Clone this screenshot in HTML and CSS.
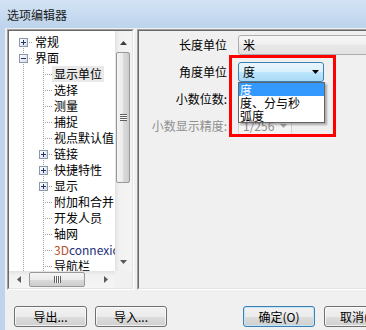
FILE: index.html
```html
<!DOCTYPE html>
<html lang="zh-CN">
<head>
<meta charset="utf-8">
<title>选项编辑器</title>
<link rel="stylesheet" href="styles.css">
</head>
<body>
<div class="window">
  <div class="titlebar">选项编辑器</div>
  <div class="frame">
    <div class="main">
      <div class="tree-panel">
        <div class="tree-body">
          <div class="tree-view">
            <div class="node"><span class="cell cell-a first"><span class="box plus"></span></span><span class="label">常规</span></div>
            <div class="node"><span class="cell cell-a mid"><span class="box minus"></span></span><span class="label">界面</span></div>
            <div class="node"><span class="cell rail"></span><span class="cell cell-b"></span><span class="label selected">显示单位</span></div>
            <div class="node"><span class="cell rail"></span><span class="cell cell-b"></span><span class="label">选择</span></div>
            <div class="node"><span class="cell rail"></span><span class="cell cell-b"></span><span class="label">测量</span></div>
            <div class="node"><span class="cell rail"></span><span class="cell cell-b"></span><span class="label">捕捉</span></div>
            <div class="node"><span class="cell rail"></span><span class="cell cell-b"></span><span class="label">视点默认值</span></div>
            <div class="node"><span class="cell rail"></span><span class="cell cell-b"><span class="box plus"></span></span><span class="label">链接</span></div>
            <div class="node"><span class="cell rail"></span><span class="cell cell-b"><span class="box plus"></span></span><span class="label">快捷特性</span></div>
            <div class="node"><span class="cell rail"></span><span class="cell cell-b"><span class="box plus"></span></span><span class="label">显示</span></div>
            <div class="node"><span class="cell rail"></span><span class="cell cell-b"></span><span class="label">附加和合并</span></div>
            <div class="node"><span class="cell rail"></span><span class="cell cell-b"></span><span class="label">开发人员</span></div>
            <div class="node"><span class="cell rail"></span><span class="cell cell-b"></span><span class="label">轴网</span></div>
            <div class="node"><span class="cell rail"></span><span class="cell cell-b"></span><span class="label"><span class="brand3d">3D</span><span class="brandrest">connexion</span></span></div>
            <div class="node"><span class="cell rail"></span><span class="cell cell-b"></span><span class="label">导航栏</span></div>
          </div>
          <div class="vscroll">
            <div class="sb-btn up"><svg width="7" height="4" viewBox="0 0 7 4"><path d="M0 4H7L3.5 0Z" fill="#3c3c3c"/></svg></div>
            <div class="sb-track"><div class="thumb-v"><span class="grip-h"></span></div></div>
            <div class="sb-btn down"><svg width="7" height="4" viewBox="0 0 7 4"><path d="M0 0H7L3.5 4Z" fill="#5a5a5a"/></svg></div>
          </div>
          <div class="hscroll">
            <div class="sb-btn left"><svg width="4" height="7" viewBox="0 0 4 7"><path d="M4 0V7L0 3.5Z" fill="#5a5a5a"/></svg></div>
            <div class="sb-track-h"><div class="thumb-h"><span class="grip-v"></span></div></div>
            <div class="sb-btn right"><svg width="4" height="7" viewBox="0 0 4 7"><path d="M0 0V7L4 3.5Z" fill="#5a5a5a"/></svg></div>
          </div>
          <div class="corner"></div>
        </div>
      </div>
      <div class="prop-panel">
        <div class="prop-body">
          <div class="form">
            <span class="lbl">长度单位</span>
            <div class="combo wide">米</div>
            <span class="lbl">角度单位</span>
            <div class="combo focused">
              <span class="combo-text">度</span>
              <svg class="arrow" width="7" height="4" viewBox="0 0 7 4"><path d="M0 0H7L3.5 4Z" fill="#000"/></svg>
              <div class="dropdown">
                <div class="opt active">度</div>
                <div class="opt">度、分与秒</div>
                <div class="opt">弧度</div>
              </div>
              <div class="highlight-box"></div>
            </div>
            <span class="lbl">小数位数:</span>
            <div class="combo normal"></div>
            <span class="lbl disabled">小数显示精度:</span>
            <div class="combo off">
              <span class="combo-text">1/256</span>
              <svg class="arrow" width="7" height="4" viewBox="0 0 7 4"><path d="M0 0H7L3.5 4Z" fill="#a8a8a8"/></svg>
            </div>
          </div>
        </div>
      </div>
    </div>
    <div class="buttons">
      <button class="btn w73">导出...</button>
      <button class="btn w72 gap-s">导入...</button>
      <button class="btn w72 default gap-l">确定(O)</button>
      <button class="btn w72 gap-m">取消(C)</button>
    </div>
  </div>
</div>
</body>
</html>
```

FILE: styles.css
```css
html, body {
  margin: 0;
  padding: 0;
  overflow: hidden;
  background: #f0f0f0;
}

body {
  font-family: "Noto Sans CJK SC", "Noto Sans", sans-serif;
  font-size: 12px;
  color: #000;
}

.window {
  width: 440px;
  height: 330px;
  background: #f0f0f0;
}

.titlebar {
  height: 28px;
  box-sizing: border-box;
  padding-left: 7px;
  line-height: 30px;
  font-size: 12px;
  color: #1a1a1a;
  background: linear-gradient(#d3e3f5, #bdd3ec);
}

.frame {
  height: 302px;
  box-sizing: border-box;
  border-left: 5px solid #bfd4ec;
}

.main {
  display: flex;
  gap: 3px;
  height: 262px;
  box-sizing: border-box;
  padding: 1px 0 0 2px;
}

/* ---------- tree panel ---------- */
.tree-panel {
  width: 127px;
  flex: none;
  box-sizing: border-box;
  border: 1px solid;
  border-color: #a0a0a0 #ffffff #ffffff #a0a0a0;
}

.tree-body {
  height: 100%;
  box-sizing: border-box;
  border: 1px solid;
  border-color: #696969 #e3e3e3 #e3e3e3 #696969;
  display: grid;
  grid-template-columns: 1fr 17px;
  grid-template-rows: 1fr 17px;
}

.tree-view {
  background: #fff;
  overflow: hidden;
  min-width: 0;
  min-height: 0;
  padding-top: 3px;
}

.node {
  display: flex;
  height: 16px;
  padding-left: 4px;
  white-space: nowrap;
}

.cell {
  flex: none;
  height: 16px;
  box-sizing: border-box;
  display: flex;
  align-items: flex-start;
}

.cell-a {
  width: 20px;
  padding-left: 6px;
}

.cell-a.first {
  background:
    repeating-linear-gradient(to bottom, #a0a0a0 0 1px, transparent 1px 2px) 10px 8px / 1px 8px no-repeat,
    repeating-linear-gradient(to right, #a0a0a0 0 1px, transparent 1px 2px) 10px 8px / 10px 1px no-repeat;
}

.cell-a.mid {
  background:
    repeating-linear-gradient(to bottom, #a0a0a0 0 1px, transparent 1px 2px) 10px 0 / 1px 16px no-repeat,
    repeating-linear-gradient(to right, #a0a0a0 0 1px, transparent 1px 2px) 10px 8px / 10px 1px no-repeat;
}

.rail {
  width: 20px;
  background:
    repeating-linear-gradient(to bottom, #a0a0a0 0 1px, transparent 1px 2px) 10px 0 / 1px 16px no-repeat;
}

.cell-b {
  width: 19px;
  padding-left: 6px;
  background:
    repeating-linear-gradient(to bottom, #a0a0a0 0 1px, transparent 1px 2px) 10px 0 / 1px 16px no-repeat,
    repeating-linear-gradient(to right, #a0a0a0 0 1px, transparent 1px 2px) 10px 8px / 9px 1px no-repeat;
}

.box {
  width: 9px;
  height: 9px;
  box-sizing: border-box;
  margin-top: 4px;
  border: 1px solid #8b98aa;
}

.box.plus {
  background:
    linear-gradient(#1f3a72, #1f3a72) 1px 3px / 5px 1px no-repeat,
    linear-gradient(#1f3a72, #1f3a72) 3px 1px / 1px 5px no-repeat,
    linear-gradient(135deg, #ffffff, #d9dde3);
}

.box.minus {
  background:
    linear-gradient(#1f3a72, #1f3a72) 1px 3px / 5px 1px no-repeat,
    linear-gradient(135deg, #ffffff, #d9dde3);
}

.label {
  padding: 0 2px;
  line-height: 16px;
  height: 16px;
}

.label.selected {
  background: #e9e9e9;
}

.brand3d {
  color: #b8502a;
}

.brandrest {
  color: #23307a;
}

/* ---------- scrollbars ---------- */
.vscroll {
  display: flex;
  flex-direction: column;
  background: linear-gradient(to right, #e2e2e2, #f1f1f1 25%, #f5f5f5);
}

.sb-btn {
  display: flex;
  align-items: center;
  justify-content: center;
  flex: none;
}

.sb-btn svg {
  display: block;
}

.sb-btn.up {
  height: 20px;
  padding-top: 3px;
  box-sizing: border-box;
}

.sb-btn.down {
  height: 18px;
}

.sb-track {
  flex: 1;
  padding: 1px 2px 0 1px;
}

.thumb-v {
  height: 131px;
  box-sizing: border-box;
  border: 1px solid #989898;
  border-radius: 2px;
  background: linear-gradient(to right, #f4f4f4, #ebebeb 50%, #dbdbdb 51%, #cdcdcd);
  display: flex;
  align-items: center;
  justify-content: center;
}

.grip-h {
  width: 7px;
  height: 7px;
  background: repeating-linear-gradient(to bottom, #5f5f5f 0 1px, #f8f8f8 1px 2px);
}

.hscroll {
  display: flex;
  background: linear-gradient(to bottom, #e2e2e2, #f1f1f1 25%, #f5f5f5);
}

.sb-btn.left {
  width: 19px;
}

.sb-btn.right {
  width: 19px;
}

.sb-track-h {
  flex: 1;
  padding: 1px 0 0 1px;
}

.thumb-h {
  width: 56px;
  height: 15px;
  box-sizing: border-box;
  border: 1px solid #989898;
  border-radius: 2px;
  background: linear-gradient(to bottom, #f4f4f4, #ebebeb 50%, #dbdbdb 51%, #cdcdcd);
  display: flex;
  align-items: center;
  justify-content: center;
}

.grip-v {
  width: 7px;
  height: 7px;
  background: repeating-linear-gradient(to right, #5f5f5f 0 1px, #f8f8f8 1px 2px);
}

.corner {
  background: #f0f0f0;
}

/* ---------- property panel ---------- */
.prop-panel {
  flex: 1;
  box-sizing: border-box;
  border: 1px solid;
  border-color: #a0a0a0 #ffffff #ffffff #a0a0a0;
}

.prop-body {
  height: 100%;
  box-sizing: border-box;
  border: 1px solid;
  border-color: #696969 #e3e3e3 #e3e3e3 #696969;
  padding-top: 4px;
  background: #f0f0f0;
}

.form {
  display: grid;
  grid-template-columns: 88px auto;
  grid-auto-rows: 20px;
  column-gap: 11px;
  row-gap: 7px;
  align-items: center;
  justify-items: start;
}

.lbl {
  justify-self: end;
  line-height: 20px;
  white-space: nowrap;
}

.lbl.disabled {
  color: #8f8f8f;
}

.combo {
  height: 20px;
  box-sizing: border-box;
  display: flex;
  align-items: center;
  padding: 0 0 0 4px;
  border: 1px solid #adadad;
  border-radius: 3px;
  line-height: 18px;
  position: relative;
}

.combo.wide {
  width: 200px;
  background: linear-gradient(#f7f7f7, #efefef 50%, #e7e7e7 51%, #e3e3e3);
}

.combo.normal {
  width: 86px;
  background: linear-gradient(#f7f7f7, #e7e7e7);
}

.combo.focused {
  width: 86px;
  border-color: #3c7fb1;
  background: linear-gradient(#eaf6fd, #d9f0fc 50%, #bee6fd 51%, #a7d9f5);
}

.combo.off {
  width: 54px;
  border-color: #d5d5d5;
  background: #f4f4f4;
  color: #8d8d8d;
}

.combo-text {
  flex: 1;
}

.arrow {
  display: block;
  flex: none;
  margin-right: 4px;
}

.dropdown {
  position: absolute;
  z-index: 5;
  left: -1px;
  top: calc(100% + 1px);
  width: 87px;
  box-sizing: border-box;
  border: 1px solid #646464;
  background: #fff;
  box-shadow: 2px 2px 2px rgba(0, 0, 0, 0.3);
  color: #000;
}

.opt {
  height: 13px;
  line-height: 13px;
  padding-left: 1px;
  white-space: nowrap;
}

.opt.active {
  background: #3399ff;
  color: #fff;
}

.highlight-box {
  position: absolute;
  z-index: 6;
  left: -10px;
  top: -8px;
  width: 107px;
  height: 82px;
  box-sizing: border-box;
  border: 3px solid #ff0000;
  pointer-events: none;
}

/* ---------- buttons ---------- */
.buttons {
  display: flex;
  padding: 16px 0 0 9px;
}

.btn {
  flex: none;
  height: 21px;
  box-sizing: border-box;
  padding: 0;
  margin: 0;
  font-family: inherit;
  font-size: 12px;
  line-height: 19px;
  color: #000;
  border: 1px solid #707070;
  border-radius: 3px;
  background: linear-gradient(#f2f2f2, #ebebeb 50%, #dddddd 51%, #cfcfcf);
  box-shadow: inset 0 0 0 1px rgba(255, 255, 255, 0.7);
}

.btn.default {
  border-color: #3c7fb1;
  box-shadow: inset 0 0 0 1px #bfe6fb;
}

.w73 { width: 73px; }
.w72 { width: 72px; }
.gap-s { margin-left: 8px; }
.gap-l { margin-left: 76px; }
.gap-m { margin-left: 9px; }
```
